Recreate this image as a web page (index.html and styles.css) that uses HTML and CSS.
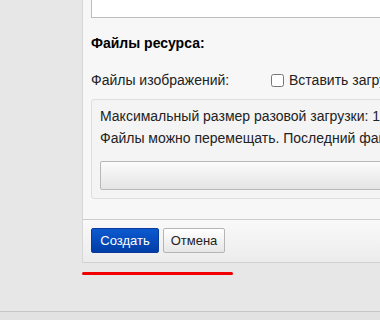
FILE: index.html
```html
<!DOCTYPE html>
<html>
  <head>
    <title>Создать ресурс</title>
    <link rel="stylesheet" href="styles.css">
  </head>
  <body>
    <div class="page">
      <div class="gutter"></div>
      <div class="column">
        <form class="panel">
          <div class="panel-body">
            <div class="text-field"></div>

            <h3 class="section-title">Файлы ресурса:</h3>

            <div class="field-row">
              <label class="field-label">Файлы изображений:</label>
              <label class="check">
                <input type="checkbox" />
                <span>Вставить загруженные изображения</span>
              </label>
            </div>

            <div class="upload-box">
              <p>Максимальный размер разовой загрузки: 10 Мб</p>
              <p>Файлы можно перемещать. Последний файл будет обложкой</p>
              <div class="drop-zone"></div>
            </div>
          </div>

          <div class="panel-footer">
            <button type="submit" class="btn btn-primary">Создать</button>
            <button type="button" class="btn btn-cancel">Отмена</button>
          </div>
        </form>
        <div class="underline"></div>
      </div>
    </div>
    <div class="bottom-bar"></div>
  </body>
</html>
```

FILE: styles.css
```css
* {
  margin: 0;
  padding: 0;
  box-sizing: border-box;
}
html,
body {
  height: 100%;
  overflow: hidden;
}
body {
  background: #e7e7e7;
  font-family: "Liberation Sans", Arial, sans-serif;
  font-size: 14px;
  line-height: 16px;
  color: #222;
}
.page {
  display: flex;
  height: 311px;
}
.gutter {
  width: 82px;
  flex-shrink: 0;
}
.column {
  width: 460px;
  flex-shrink: 0;
}
.panel {
  background: #f7f7f7;
  border-left: 1px solid #d6d6d6;
  border-bottom: 1px solid #d0d0d0;
}
.panel-body {
  padding: 0 0 20px 8px;
}
.text-field {
  height: 38px;
  margin-top: -20px;
  background: #fff;
  border: 1px solid #bdbdbd;
}
.section-title {
  font-size: 14px;
  font-weight: bold;
  color: #000;
  margin-top: 17px;
  height: 16px;
}
.field-row {
  display: flex;
  align-items: center;
  margin-top: 18px;
  height: 22px;
  white-space: nowrap;
}
.field-label {
  width: 180px;
  flex-shrink: 0;
}
.check {
  display: flex;
  align-items: center;
  gap: 5px;
}
.check input {
  width: 13px;
  height: 13px;
  margin: 0;
}
.upload-box {
  margin-top: 8px;
  padding: 5px 8px 8px;
  border: 1px solid #dedede;
  border-radius: 3px;
  background: #f4f4f4;
  white-space: nowrap;
  p {
    line-height: 22px;
  }
}
.drop-zone {
  margin-top: 12px;
  height: 29px;
  border: 1px solid #b8b8b8;
  border-radius: 2px;
  background: linear-gradient(#fbfbfb, #e4e4e4);
}
.panel-footer {
  display: flex;
  gap: 4px;
  padding: 8px 8px 9px;
  border-top: 1px solid #cccccc;
  background: linear-gradient(#f9f9f9, #ececec);
}
.btn {
  height: 25px;
  font-family: "Liberation Sans", Arial, sans-serif;
  font-size: 13px;
  color: #222;
  border: 1px solid #b5b5b5;
  border-radius: 2px;
  background: linear-gradient(#ffffff, #e6e6e6);
}
.btn-primary {
  width: 68px;
  color: #fff;
  border-color: #0a3a9a;
  background: linear-gradient(#0c5ad0, #003da6);
}
.btn-cancel {
  width: 62px;
}
.underline {
  margin-top: 9px;
  width: 151px;
  height: 3px;
  border-radius: 2px;
  background: #f20000;
}
.bottom-bar {
  height: 9px;
  border-top: 1px solid #c6c6c6;
  background: #e2e2e2;
}
```
